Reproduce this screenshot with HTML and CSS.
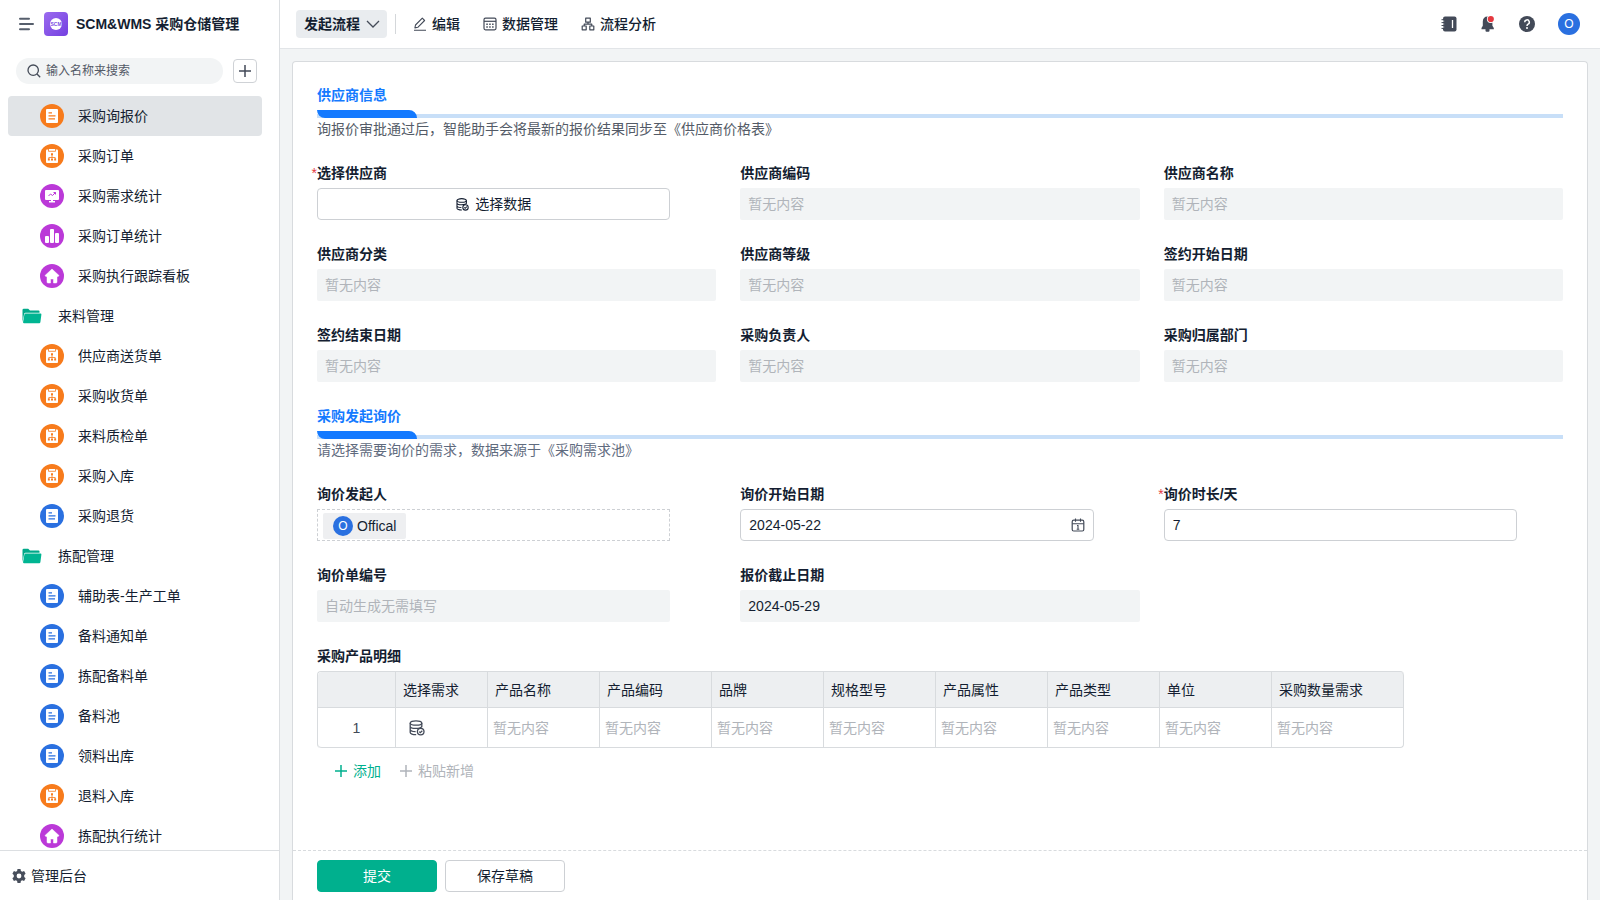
FILE: index.html
```html
<!DOCTYPE html>
<html lang="zh-CN">
<head>
<meta charset="utf-8">
<title>SCM&amp;WMS 采购仓储管理</title>
<link rel="stylesheet" href="styles.css">
</head>
<body>
<svg class="sprite" aria-hidden="true">
  <symbol id="doc" viewBox="0 0 24 24"><circle cx="12" cy="12" r="12" fill="currentColor"/><rect x="6" y="5" width="12" height="14" rx="1" fill="#fff"/><path d="M8.500 8.800h3.500M8.500 11.800h7M8.500 14.800h6.500" stroke="currentColor" stroke-width="1.200"/></symbol>
  <symbol id="flow" viewBox="0 0 24 24"><circle cx="12" cy="12" r="12" fill="currentColor"/><rect x="6" y="5.500" width="12" height="13.500" rx="1" fill="#fff"/><path d="M8.500 5v2.300h7V5" fill="#fff" stroke="currentColor" stroke-width=".8"/><path d="M12 11v3M8.800 15v-1.500h6.400V15" stroke="currentColor" stroke-width=".8" fill="none"/><path d="M11 9.300h2v2h-2zM7.900 14.500h1.900v2H7.900zM11 14.500h2v2h-2zM14.200 14.500h1.900v2h-1.900z" fill="currentColor"/></symbol>
  <symbol id="screen" viewBox="0 0 24 24"><circle cx="12" cy="12" r="12" fill="currentColor"/><rect x="5" y="6" width="14" height="10" rx="1" fill="#fff"/><path d="M11 16h2v1h2v1.500H9V17h2z" fill="#fff"/><path d="M8.500 12l2-2 2 1.500 3-3M13.500 8.500h2v2" stroke="currentColor" stroke-width="1" fill="none"/></symbol>
  <symbol id="bars" viewBox="0 0 24 24"><circle cx="12" cy="12" r="12" fill="currentColor"/><rect x="5" y="12" width="4" height="7" rx="1" fill="#fff"/><rect x="10" y="5" width="4" height="14" rx="1" fill="#fff"/><rect x="15" y="9" width="4" height="10" rx="1" fill="#fff"/></symbol>
  <symbol id="home" viewBox="0 0 24 24"><circle cx="12" cy="12" r="12" fill="currentColor"/><path d="M12 5l7 6.500-.8 1H17V18a1 1 0 0 1-1 1h-2.500v-4h-3v4H8a1 1 0 0 1-1-1v-5.500H5.800l-.8-1z" fill="#fff" stroke="#fff" stroke-width=".5" stroke-linejoin="round"/></symbol>
  <symbol id="folder" viewBox="0 0 20 16"><path d="M.5 14V2A1.300 1.300 0 0 1 1.800.7h4.400L8 2.500h8.500a1 1 0 0 1 1 1v1.200H3.600a1.500 1.500 0 0 0-1.500 1.200z" fill="#00a989"/><path d="M3.500 5.400h15a.9.9 0 0 1 .9 1l-1 7.600a1.300 1.300 0 0 1-1.300 1.200H2.100a1 1 0 0 1-1-1.200l1.300-7.600a1.200 1.200 0 0 1 1.100-1z" fill="#00b592"/></symbol>
  <symbol id="plus" viewBox="0 0 14 14"><path d="M7 1v12M1 7h12" stroke="currentColor" stroke-width="1.500" fill="none"/></symbol>
  <symbol id="database" viewBox="0 0 16 16"><g fill="none" stroke="currentColor" stroke-width="1.300"><ellipse cx="7" cy="3" rx="5.800" ry="2.200"/><path d="M1.200 3v9.500c0 1.300 2.600 2.300 6 2.200M12.800 3v4.200M1.200 6.200c0 1.300 2.600 2.200 5.800 2.200s5.800-.9 5.800-2.200M1.200 9.400c0 1.200 2.400 2.100 5.400 2.200"/><circle cx="11.700" cy="11.600" r="3.300"/><path d="M10.200 11.600l1.100 1.100 2-2"/></g></symbol>
</svg>
<div class="app">
  <aside class="sidebar">
    <div class="brand">
      <button class="icon-btn" aria-label="收起菜单"><svg width="16" height="14" viewBox="0 0 16 14"><path d="M1 1.700h9M1 7h13M1 12.300h9" stroke="#565e6c" stroke-width="2" stroke-linecap="round"/></svg></button>
      <span class="logo"><span class="logo-text">SCM</span></span>
      <h1 class="brand-name">SCM&amp;WMS 采购仓储管理</h1>
    </div>
    <div class="search-row">
      <label class="search"><svg width="14" height="14" viewBox="0 0 14 14"><circle cx="6.200" cy="6.200" r="5.200" fill="none" stroke="#444b58" stroke-width="1.300"/><path d="M10 10l3.200 3.200" stroke="#444b58" stroke-width="1.300"/></svg><input class="search-input" type="text" placeholder="输入名称来搜索" aria-label="搜索"></label>
      <button class="add-btn" aria-label="新建"><svg width="14" height="14"><use href="#plus"/></svg></button>
    </div>
    <nav class="menu">
      <a class="item active" href="#"><svg class="ico orange"><use href="#doc"/></svg>采购询报价</a>
      <a class="item" href="#"><svg class="ico orange"><use href="#flow"/></svg>采购订单</a>
      <a class="item" href="#"><svg class="ico purple"><use href="#screen"/></svg>采购需求统计</a>
      <a class="item" href="#"><svg class="ico purple"><use href="#bars"/></svg>采购订单统计</a>
      <a class="item" href="#"><svg class="ico purple"><use href="#home"/></svg>采购执行跟踪看板</a>
      <a class="item group" href="#"><svg class="folder"><use href="#folder"/></svg>来料管理</a>
      <a class="item" href="#"><svg class="ico orange"><use href="#flow"/></svg>供应商送货单</a>
      <a class="item" href="#"><svg class="ico orange"><use href="#flow"/></svg>采购收货单</a>
      <a class="item" href="#"><svg class="ico orange"><use href="#flow"/></svg>来料质检单</a>
      <a class="item" href="#"><svg class="ico orange"><use href="#flow"/></svg>采购入库</a>
      <a class="item" href="#"><svg class="ico blue"><use href="#doc"/></svg>采购退货</a>
      <a class="item group" href="#"><svg class="folder"><use href="#folder"/></svg>拣配管理</a>
      <a class="item" href="#"><svg class="ico blue"><use href="#doc"/></svg>辅助表-生产工单</a>
      <a class="item" href="#"><svg class="ico blue"><use href="#doc"/></svg>备料通知单</a>
      <a class="item" href="#"><svg class="ico blue"><use href="#doc"/></svg>拣配备料单</a>
      <a class="item" href="#"><svg class="ico blue"><use href="#doc"/></svg>备料池</a>
      <a class="item" href="#"><svg class="ico blue"><use href="#doc"/></svg>领料出库</a>
      <a class="item" href="#"><svg class="ico orange"><use href="#flow"/></svg>退料入库</a>
      <a class="item" href="#"><svg class="ico purple"><use href="#home"/></svg>拣配执行统计</a>
    </nav>
    <a class="admin" href="#"><svg width="14" height="14" viewBox="0 0 14 14"><path fill="#474e5b" fill-rule="evenodd" d="M5.500 0h3l.4 1.900 1.300.8 1.900-.6 1.500 2.600L12.200 6v2l1.400 1.300-1.500 2.600-1.900-.6-1.300.8-.4 1.900h-3l-.4-1.900-1.300-.8-1.900.6L.4 9.300 1.800 8V6L.4 4.700l1.500-2.600 1.900.6 1.300-.8zM7 4.600a2.400 2.400 0 1 0 0 4.800 2.400 2.400 0 0 0 0-4.800z"/></svg>管理后台</a>
  </aside>

  <div class="main">
    <header class="topbar">
      <button class="start-btn">发起流程<svg width="14" height="8" viewBox="0 0 14 8"><path d="M1 1l6 6 6-6" fill="none" stroke="#444b58" stroke-width="1.300"/></svg></button>
      <span class="divider"></span>
      <nav class="tabs">
        <a class="tab" href="#"><svg width="14" height="14" viewBox="0 0 14 14"><path d="M2.500 8L9.300 1.200l2.300 2.300L4.800 10.300l-2.900.6zM1 13.200h12" fill="none" stroke="#434a58" stroke-width="1.100" stroke-linejoin="round"/></svg>编辑</a>
        <a class="tab" href="#"><svg width="14" height="14" viewBox="0 0 14 14"><rect x="1" y="1.200" width="12" height="11.600" rx="1.500" fill="none" stroke="#434a58" stroke-width="1.200"/><path d="M1 4.300h12" stroke="#434a58" stroke-width="1.200"/><path d="M3.300 7.200h8M3.300 10h8" stroke="#434a58" stroke-width="1.500" stroke-dasharray="1.500 1.400"/></svg>数据管理</a>
        <a class="tab" href="#"><svg width="14" height="14" viewBox="0 0 14 14"><path d="M4.700 1.200h4.600v4H4.700zM1.200 9h4v3.800h-4zM8.800 9h4v3.800h-4zM7 5.200v2M3.200 9V7.200h7.600V9" fill="none" stroke="#434a58" stroke-width="1.200" stroke-linejoin="round"/></svg>流程分析</a>
      </nav>
      <div class="tools">
        <button class="icon-btn" aria-label="通讯录"><svg width="16" height="16" viewBox="0 0 16 16"><rect x="2" y=".5" width="13.500" height="15" rx="2" fill="#434a58"/><path d="M.5 3.700h3M.5 6.600h3M.5 9.500h3M.5 12.400h3" stroke="#434a58"/><path d="M2 5.100h1.200M2 8h1.200M2 11h1.200" stroke="#fff" stroke-width=".8"/><path d="M11.500 4v8" stroke="#fff" stroke-width="1.300"/></svg></button>
        <button class="icon-btn" aria-label="消息通知"><svg width="16" height="18" viewBox="0 0 16 18"><path d="M7.500 1.500c-3 0-4.700 2-4.700 5v4.200L1.500 13v1.300h12.300V13l-1.400-2.300V6.500c0-3-1.900-5-4.900-5zM5.500 14.300h4v1.500a1 1 0 0 1-1 1h-2a1 1 0 0 1-1-1z" fill="#434a58"/><circle cx="10.800" cy="4" r="3.900" fill="#fff"/><circle cx="10.800" cy="4" r="3.100" fill="#e5393f"/></svg></button>
        <button class="icon-btn" aria-label="帮助"><svg width="16" height="16" viewBox="0 0 16 16"><circle cx="8" cy="8" r="8" fill="#434a58"/><path d="M5.700 6.200a2.300 2.300 0 1 1 3.400 2c-.8.500-1.100.8-1.100 1.700" fill="none" stroke="#fff" stroke-width="1.500"/><circle cx="8" cy="12" r="1" fill="#fff"/></svg></button>
        <button class="avatar large">O</button>
      </div>
    </header>

    <form class="card">
      <div class="content">
        <section class="section">
          <div class="section-head">
            <h2 class="section-title">供应商信息</h2>
            <div class="section-bar"><span class="bar-mark"></span></div>
            <p class="section-desc">询报价审批通过后，智能助手会将最新的报价结果同步至《供应商价格表》</p>
          </div>
          <div class="grid">
            <div class="field narrow"><label class="label required" for="pick">选择供应商</label><button type="button" id="pick" class="control pick"><svg width="13" height="13"><use href="#database"/></svg>选择数据</button></div>
            <div class="field"><label class="label" for="f1">供应商编码</label><input id="f1" class="control muted" placeholder="暂无内容" readonly></div>
            <div class="field"><label class="label" for="f2">供应商名称</label><input id="f2" class="control muted" placeholder="暂无内容" readonly></div>
            <div class="field"><label class="label" for="f3">供应商分类</label><input id="f3" class="control muted" placeholder="暂无内容" readonly></div>
            <div class="field"><label class="label" for="f4">供应商等级</label><input id="f4" class="control muted" placeholder="暂无内容" readonly></div>
            <div class="field"><label class="label" for="f5">签约开始日期</label><input id="f5" class="control muted" placeholder="暂无内容" readonly></div>
            <div class="field"><label class="label" for="f6">签约结束日期</label><input id="f6" class="control muted" placeholder="暂无内容" readonly></div>
            <div class="field"><label class="label" for="f7">采购负责人</label><input id="f7" class="control muted" placeholder="暂无内容" readonly></div>
            <div class="field"><label class="label" for="f8">采购归属部门</label><input id="f8" class="control muted" placeholder="暂无内容" readonly></div>
          </div>
        </section>

        <section class="section">
          <div class="section-head">
            <h2 class="section-title">采购发起询价</h2>
            <div class="section-bar"><span class="bar-mark"></span></div>
            <p class="section-desc slate">请选择需要询价的需求，数据来源于《采购需求池》</p>
          </div>
          <div class="grid">
            <div class="field narrow"><span class="label">询价发起人</span><div class="control person"><span class="chip"><span class="avatar">O</span>Offical</span></div></div>
            <div class="field narrow"><label class="label" for="d1">询价开始日期</label><div class="control date"><input id="d1" class="date-input" type="text" value="2024-05-22"><button type="button" class="icon-btn" aria-label="选择日期"><svg width="14" height="14" viewBox="0 0 14 14"><rect x="1.200" y="2.200" width="11.600" height="10.800" rx="1.500" fill="none" stroke="#434a58" stroke-width="1.200"/><path d="M1.200 5.800h11.600M4.500.5v3.300M9.500.5v3.300M6 7.500h1v3.800M5.700 11.300h2.600" fill="none" stroke="#434a58" stroke-width="1.100"/></svg></button></div></div>
            <div class="field narrow"><label class="label required" for="days">询价时长/天</label><input id="days" class="control" type="text" value="7"></div>
            <div class="field narrow"><label class="label" for="no">询价单编号</label><input id="no" class="control muted" placeholder="自动生成无需填写" readonly></div>
            <div class="field"><label class="label" for="d2">报价截止日期</label><input id="d2" class="control muted" value="2024-05-29" readonly></div>
          </div>
        </section>

        <section class="details">
          <h3 class="label">采购产品明细</h3>
          <table class="table">
            <colgroup><col class="c-index"><col class="c-pick"><col><col><col><col><col><col><col><col class="c-last"></colgroup>
            <thead><tr><th></th><th>选择需求</th><th>产品名称</th><th>产品编码</th><th>品牌</th><th>规格型号</th><th>产品属性</th><th>产品类型</th><th>单位</th><th>采购数量需求</th></tr></thead>
            <tbody><tr><td class="index">1</td><td class="pick-cell"><button type="button" class="icon-btn" aria-label="选择需求"><svg width="16" height="16"><use href="#database"/></svg></button></td><td>暂无内容</td><td>暂无内容</td><td>暂无内容</td><td>暂无内容</td><td>暂无内容</td><td>暂无内容</td><td>暂无内容</td><td>暂无内容</td></tr></tbody>
          </table>
          <div class="row-actions">
            <button type="button" class="text-btn green"><svg width="14" height="14"><use href="#plus"/></svg>添加</button>
            <button type="button" class="text-btn"><svg width="14" height="14"><use href="#plus"/></svg>粘贴新增</button>
          </div>
        </section>
      </div>
      <footer class="footer">
        <button type="button" class="btn primary">提交</button>
        <button type="button" class="btn">保存草稿</button>
      </footer>
    </form>
  </div>
</div>
</body>
</html>
```
FILE: styles.css
```css
* { box-sizing: border-box; }
body {
  margin: 0;
  font: 14px/20px "Liberation Sans", "Noto Sans CJK SC", sans-serif;
  color: #141e31;
  background: #f2f4f5;
}
h1, h2, h3, p { margin: 0; }
a { color: inherit; text-decoration: none; }
button, input { font: inherit; color: inherit; margin: 0; outline: none; }
button { cursor: pointer; }
svg { flex: none; display: block; }
.sprite { position: absolute; width: 0; height: 0; }

.app { display: flex; height: 100vh; }

/* Sidebar */
.sidebar {
  flex: none;
  width: 280px;
  display: flex;
  flex-direction: column;
  background: #fff;
  border-right: 1px solid #dcdfe2;
}
.brand { display: flex; align-items: center; height: 48px; padding-left: 19px; }
.icon-btn { display: flex; padding: 0; border: 0; background: none; color: #434a58; }
.logo {
  display: flex;
  align-items: center;
  justify-content: center;
  width: 24px;
  height: 24px;
  margin: 0 8px 0 9px;
  border-radius: 4px;
  background: linear-gradient(135deg, #9b6bef, #7440e0);
}
.logo-text {
  width: 12px;
  height: 12px;
  border-radius: 50%;
  background: #fff;
  color: #7c4be4;
  font-size: 5px;
  font-weight: 700;
  line-height: 12px;
  text-align: center;
}
.brand-name { font-size: 14px; font-weight: 600; line-height: 20px; }
.search-row { display: flex; align-items: center; gap: 10px; padding: 10px 22px 12px 16px; }
.search {
  flex: 1;
  display: flex;
  align-items: center;
  gap: 5px;
  height: 26px;
  padding: 0 11px;
  border-radius: 13px;
  background: #f2f4f5;
}
.search-input { flex: 1; min-width: 0; padding: 0; border: 0; background: none; font-size: 12px; }
.search-input::placeholder { color: #525966; opacity: 1; }
.add-btn {
  display: flex;
  align-items: center;
  justify-content: center;
  width: 24px;
  height: 24px;
  padding: 0;
  border: 1px solid #cfd2d6;
  border-radius: 4px;
  background: #fff;
  color: #434a58;
}
.menu { flex: 1; min-height: 0; overflow: hidden; padding: 0 17px 0 8px; }
.item { display: flex; align-items: center; gap: 14px; height: 40px; padding-left: 32px; border-radius: 4px; }
.item.active { background: #e1e4e7; }
.item.group { gap: 16px; padding-left: 14px; }
.ico { width: 24px; height: 24px; }
.folder { width: 20px; height: 16px; }
.orange { color: #f77b1c; }
.purple { color: #bb39d8; }
.blue { color: #2a70e0; }
.admin {
  display: flex;
  align-items: center;
  gap: 5px;
  height: 50px;
  padding-left: 12px;
  border-top: 1px solid #dcdfe2;
}

/* Top bar */
.main { flex: 1; min-width: 0; display: flex; flex-direction: column; }
.topbar {
  flex: none;
  display: flex;
  align-items: center;
  height: 49px;
  padding: 0 20px 0 16px;
  background: #fff;
  border-bottom: 1px solid #e2e5e8;
}
.start-btn {
  display: flex;
  align-items: center;
  gap: 6px;
  height: 28px;
  padding: 0 7px 0 8px;
  border: 0;
  border-radius: 4px;
  background: #e9ecef;
  font-weight: 600;
}
.divider { width: 1px; height: 20px; margin: 0 17px 0 8px; background: #d4d7da; }
.tabs { display: flex; gap: 23px; }
.tab { display: flex; align-items: center; gap: 5px; font-weight: 500; }
.tools { display: flex; align-items: center; gap: 23px; margin-left: auto; }
.avatar {
  flex: none;
  width: 20px;
  height: 20px;
  padding: 0;
  border: 0;
  border-radius: 50%;
  background: #2a70e0;
  color: #fff;
  font-size: 12px;
  line-height: 20px;
  text-align: center;
}
.avatar.large { width: 22px; height: 22px; line-height: 22px; }

/* Form card */
.card {
  flex: 1;
  min-height: 0;
  display: flex;
  flex-direction: column;
  margin: 12px 12px 0;
  border: 1px solid #d8dbde;
  border-bottom: 0;
  border-radius: 4px 4px 0 0;
  background: #fff;
}
.content { flex: 1; min-height: 0; overflow: hidden; padding: 23px 24px 0; }
.section { margin-bottom: 24px; }
.section-title { margin-bottom: 5px; font-size: 14px; font-weight: 600; line-height: 20px; color: #147aff; }
.section-bar { display: flex; height: 8px; border-bottom: 4px solid #c8dff8; }
.bar-mark { width: 100px; height: 8px; border-radius: 0 8px 0 8px; background: #147aff; }
.section-desc { margin: 1px 0 24px; color: #545b67; }
.section-desc.slate { color: #5f6b7e; }
.grid { display: grid; grid-template-columns: repeat(3, 1fr); gap: 24px; }
.field { display: flex; flex-direction: column; gap: 5px; min-width: 0; }
.field.narrow { padding-right: 46px; }
.label { position: relative; font-size: 14px; font-weight: 600; line-height: 20px; }
.required::before { content: "*"; position: absolute; right: 100%; color: #e5393f; font-weight: 400; }
.control {
  width: 100%;
  height: 32px;
  padding: 0 8px;
  border: 1px solid #cdd0d4;
  border-radius: 4px;
  background: #fff;
}
.control.muted { border: 0; border-radius: 2px; background: #f2f4f5; }
.control::placeholder { color: #b0b4ba; opacity: 1; }
.pick { display: flex; align-items: center; justify-content: center; gap: 6px; }
.person { display: flex; align-items: center; padding: 2px 5px 0; border-style: dashed; border-radius: 0; }
.chip {
  display: flex;
  align-items: center;
  gap: 4px;
  height: 26px;
  padding: 0 10px;
  border-radius: 2px;
  background: #eeeff1;
}
.date { display: flex; align-items: center; }
.date-input { flex: 1; min-width: 0; padding: 0; border: 0; background: none; }

/* Detail table */
.details .label { margin-bottom: 5px; }
.table {
  width: 1087px;
  table-layout: fixed;
  border-collapse: separate;
  border-spacing: 0;
  border: 1px solid #d8dbde;
  border-width: 1px 0 0 1px;
  border-radius: 4px;
}
.table col { width: 112px; }
.table .c-index { width: 78px; }
.table .c-pick { width: 92px; }
.table .c-last { width: 132px; }
.table th, .table td { border: 1px solid #d8dbde; border-width: 0 1px 1px 0; text-align: left; }
.table th { height: 36px; padding: 0 7px; background: #edeff1; font-weight: 400; }
.table td { height: 40px; padding: 0 5px; color: #b0b4ba; }
.table th:first-child { border-top-left-radius: 4px; }
.table th:last-child { border-top-right-radius: 4px; }
.table td:first-child { border-bottom-left-radius: 4px; }
.table td:last-child { border-bottom-right-radius: 4px; }
.table .index { text-align: center; color: #434a58; }
.table .pick-cell { padding-left: 13px; }
.row-actions { display: flex; gap: 18px; padding: 13px 17px; }
.text-btn { display: flex; align-items: center; gap: 5px; padding: 0; border: 0; background: none; color: #b0b4ba; }
.text-btn.green { color: #00b08e; }

.footer { flex: none; display: flex; gap: 8px; padding: 9px 24px 8px; border-top: 1px dashed #d8dbde; }
.btn { width: 120px; height: 32px; border: 1px solid #cdd0d4; border-radius: 4px; background: #fff; }
.btn.primary { border-color: #00b08e; background: #00b08e; color: #fff; }
```
